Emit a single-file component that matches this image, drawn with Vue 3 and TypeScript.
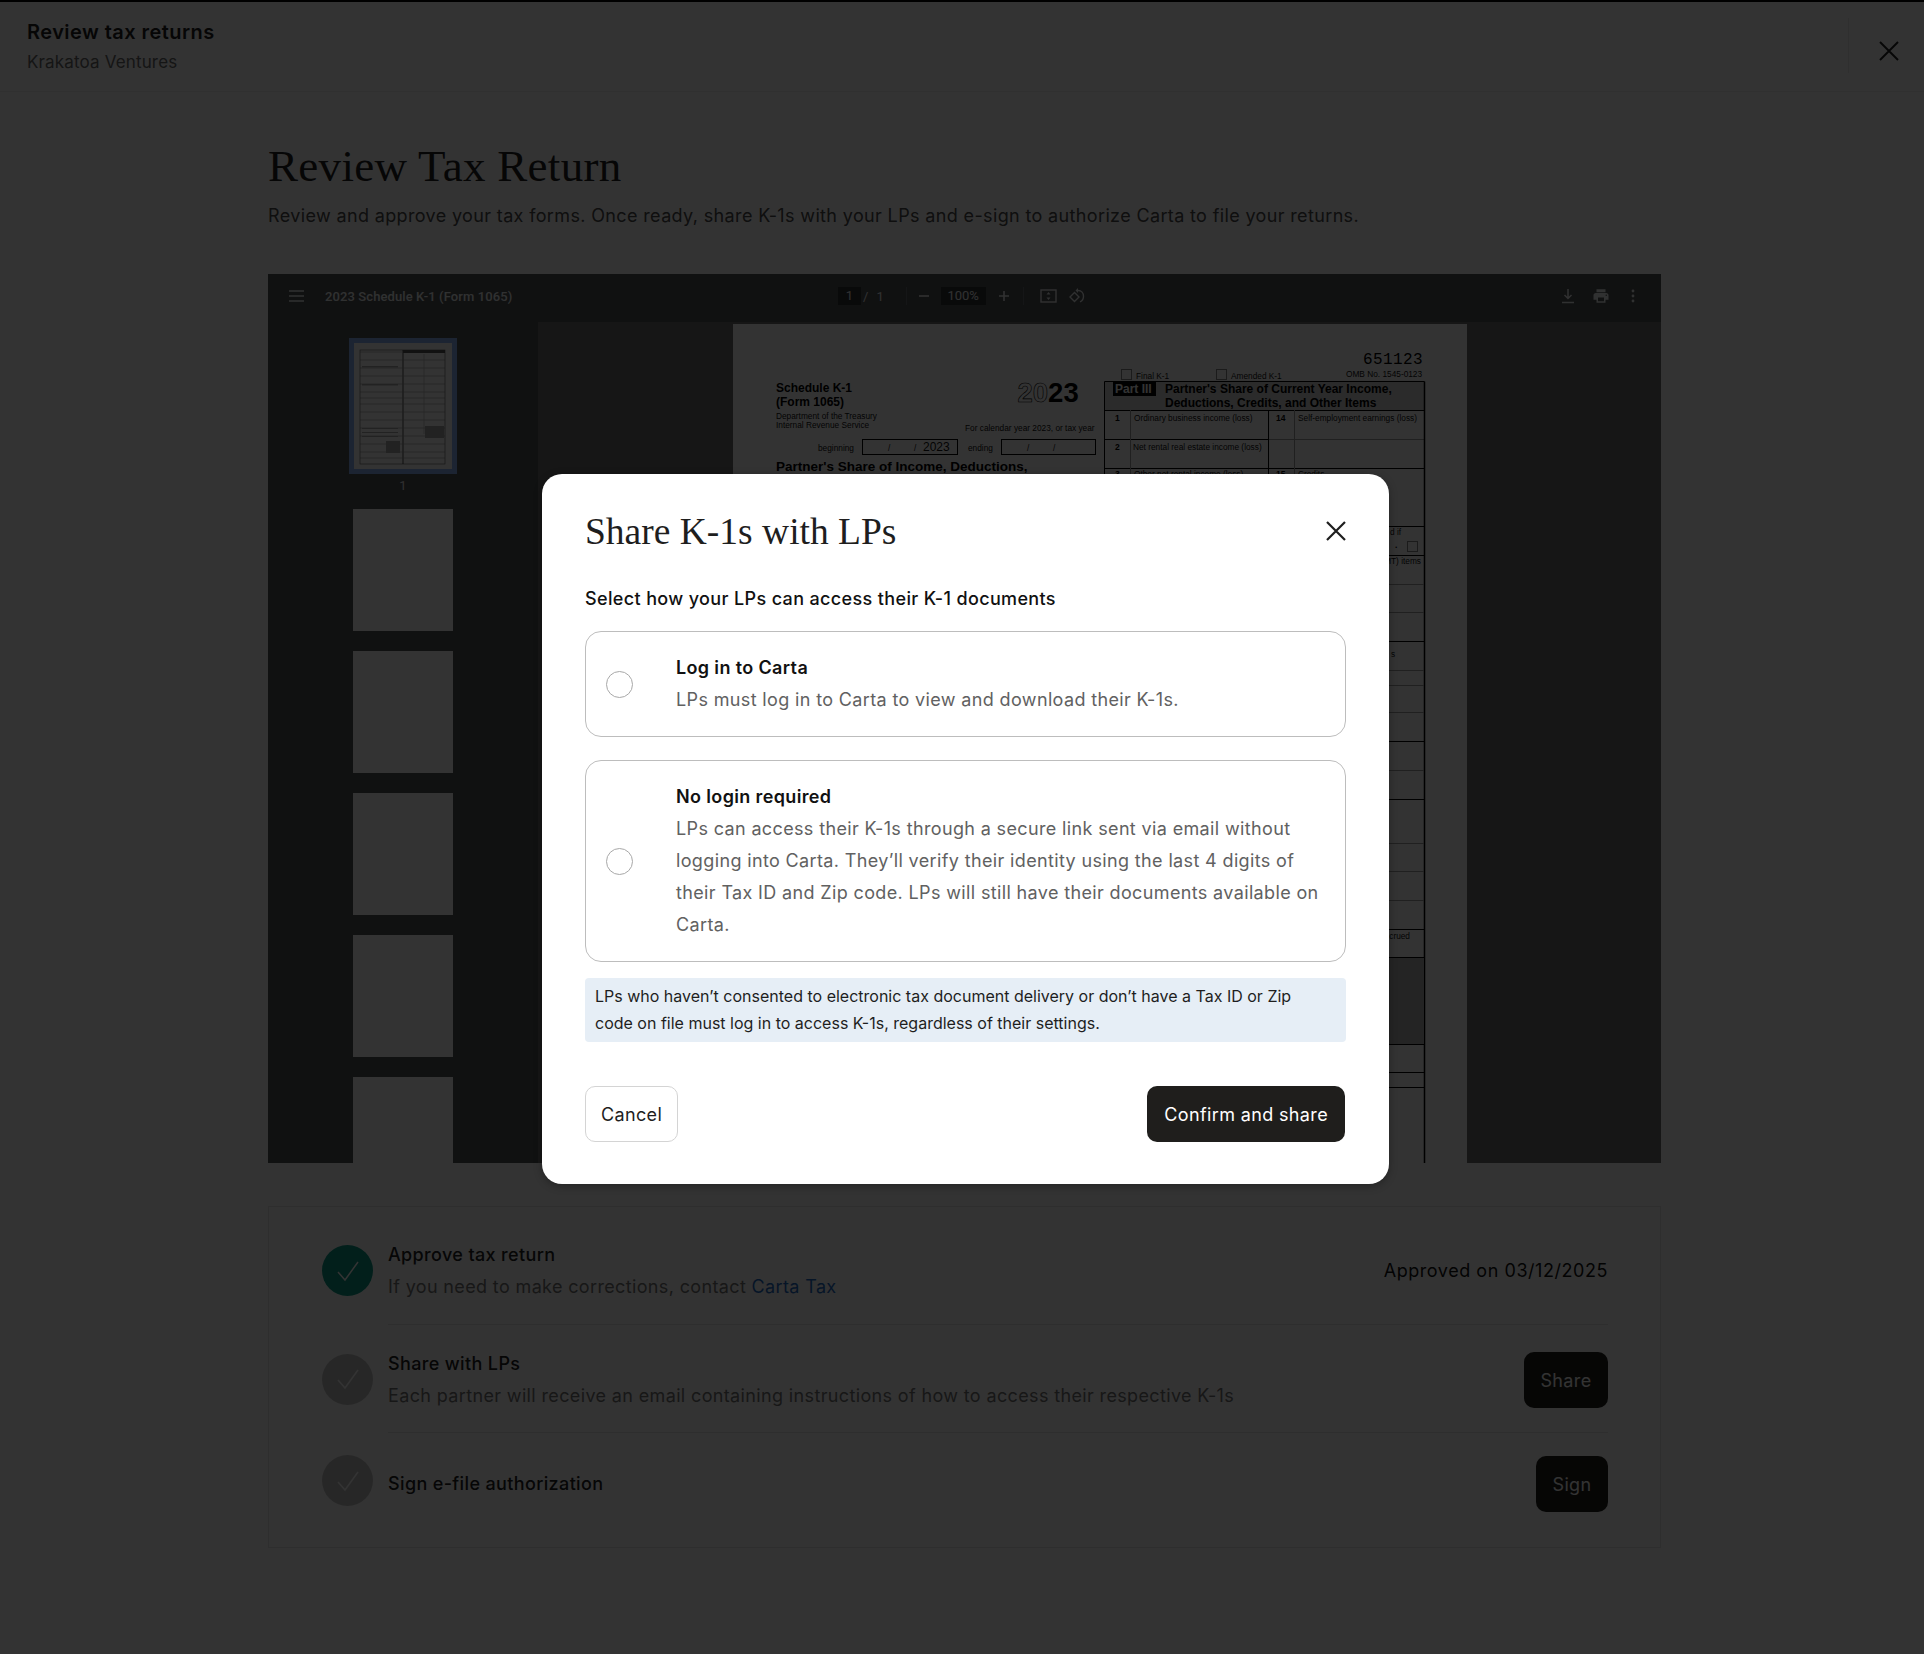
<script setup lang="ts">
import { ref } from 'vue'

const access = ref('')

const placeholders = [1, 2, 3, 4, 5]

// faint and strong rule positions of the form, only the strip right of the modal is visible
const faintRules = [584, 612, 670, 685, 712, 770, 843, 871, 900]
const darkRules = [526, 555, 641, 741, 799, 929, 957, 1044, 1072, 1087]

const thumbLines = [352, 360, 368, 376, 384, 392, 398, 404, 412, 420, 428, 436, 444, 452, 458]
const thumbBars = [
  { x: 362, y: 366, w: 36, h: 1.5 },
  { x: 362, y: 384, w: 36, h: 1.5 },
  { x: 362, y: 428, w: 36, h: 1 },
  { x: 362, y: 432, w: 36, h: 1 },
  { x: 362, y: 436, w: 36, h: 1 },
  { x: 386, y: 441, w: 14, h: 12 },
  { x: 425, y: 426, w: 19, h: 12 },
]
</script>

<template>
  <div class="page">
    <header class="topbar">
      <div>
        <div class="topbar-title">Review tax returns</div>
        <div class="topbar-sub">Krakatoa Ventures</div>
      </div>
      <button class="topbar-close" aria-label="Close">
        <svg width="20" height="20" viewBox="0 0 20 20"><path d="M1 1l18 18M19 1L1 19" stroke="#212121" stroke-width="2" fill="none" /></svg>
      </button>
    </header>

    <main class="content">
      <h1 class="heading">Review Tax Return</h1>
      <p class="intro">Review and approve your tax forms. Once ready, share K-1s with your LPs and e-sign to authorize Carta to file your returns.</p>

      <section class="viewer">
        <div class="viewer-bar">
          <div class="bar-left">
            <svg width="16" height="12" viewBox="0 0 16 12"><path d="M0 1h15M0 6h15M0 11h15" stroke="#f1f3f4" stroke-width="1.6" /></svg>
            <span class="doc-name">2023 Schedule K-1 (Form 1065)</span>
          </div>
          <div class="bar-mid">
            <span class="field page-field">1</span>
            <span class="bar-text slash">/</span>
            <span class="bar-text">1</span>
            <i class="sep first"></i>
            <svg class="minus" width="12" height="12" viewBox="0 0 12 12"><path d="M1 6h10" stroke="#f1f3f4" stroke-width="1.6" /></svg>
            <span class="field zoom-field">100%</span>
            <svg class="plus" width="12" height="12" viewBox="0 0 12 12"><path d="M1 6h10M6 1v10" stroke="#f1f3f4" stroke-width="1.6" /></svg>
            <i class="sep second"></i>
            <svg class="fit" width="17" height="14" viewBox="0 0 17 14"><rect x="1" y="1" width="15" height="12" fill="none" stroke="#f1f3f4" stroke-width="1.4" /><path d="M8.5 3l2 2.5h-4zM8.5 11l2-2.5h-4z" fill="#f1f3f4" /></svg>
            <svg class="rotate" width="16" height="18" viewBox="0 0 16 18"><path d="M5.500 5.500L1 10l4.500 4.500L10 10z" fill="none" stroke="#f1f3f4" stroke-width="1.400" /><path d="M9 3.500c3.500 0 5.500 2.700 5.500 5.800 0 2.600-1.500 4.800-3.500 5.600" fill="none" stroke="#f1f3f4" stroke-width="1.400" /><path d="M9 1v5L6.500 3.500z" fill="#f1f3f4" /></svg>
          </div>
          <div class="bar-right">
            <svg width="14" height="16" viewBox="0 0 14 16"><path d="M7 1v9M3.500 7L7 10.500 10.500 7M1 14.500h12" fill="none" stroke="#f1f3f4" stroke-width="1.500" /></svg>
            <svg width="18" height="18" viewBox="0 0 24 24"><path fill="#f1f3f4" d="M19 8H5c-1.660 0-3 1.340-3 3v6h4v4h12v-4h4v-6c0-1.660-1.340-3-3-3zm-3 11H8v-5h8v5zm3-7c-.550 0-1-.450-1-1s.450-1 1-1 1 .450 1 1-.450 1-1 1zm-1-9H6v4h12V3z" /></svg>
            <svg class="dots" width="4" height="14" viewBox="0 0 4 14"><circle cx="2" cy="2" r="1.400" fill="#f1f3f4" /><circle cx="2" cy="7" r="1.400" fill="#f1f3f4" /><circle cx="2" cy="12" r="1.400" fill="#f1f3f4" /></svg>
          </div>
        </div>

        <div class="viewer-body">
          <aside class="thumbs">
            <div class="thumb-active">
              <svg width="98" height="126" viewBox="354 343 98 126">
                <rect x="354" y="343" width="98" height="126" fill="#fff" />
                <rect x="360" y="350" width="85" height="114" fill="none" stroke="#555" stroke-width=".6" />
                <path d="M403 350v114" stroke="#222" stroke-width=".8" />
                <path d="M424 354v80" stroke="#999" stroke-width=".5" />
                <path v-for="y in thumbLines" :key="y" :d="`M360 ${y}H445`" stroke="#888" stroke-width=".5" />
                <rect v-for="b in thumbBars" :key="b.y" :x="b.x" :y="b.y" :width="b.w" :height="b.h" fill="#aaa" />
                <rect x="403" y="350" width="42" height="3" fill="#555" />
              </svg>
            </div>
            <div class="thumb-num">1</div>
            <div v-for="p in placeholders" :key="p" class="thumb-empty"></div>
          </aside>

          <div class="doc-area">
            <svg class="doc" width="734" height="839" viewBox="733 324 734 839">
              <rect x="733" y="324" width="734" height="839" fill="#fff" />

              <text x="776" y="392" class="b12">Schedule K-1</text>
              <text x="776" y="406" class="b12">(Form 1065)</text>
              <text x="776" y="419" class="r8">Department of the Treasury</text>
              <text x="776" y="428" class="r8">Internal Revenue Service</text>

              <text x="1017.500" y="402" class="year"><tspan class="year-outline">20</tspan>23</text>
              <text x="965" y="431" class="r8">For calendar year 2023, or tax year</text>

              <text x="818" y="451" class="r8">beginning</text>
              <rect x="862.500" y="439.500" width="95" height="15" class="cell" />
              <text x="888" y="451" class="r8">/</text>
              <text x="914" y="451" class="r8">/</text>
              <text x="923" y="451" class="r12">2023</text>
              <text x="968" y="451" class="r8">ending</text>
              <rect x="1001.500" y="439.500" width="94" height="15" class="cell" />
              <text x="1027" y="451" class="r8">/</text>
              <text x="1053" y="451" class="r8">/</text>

              <text x="776" y="471" class="b14">Partner's Share of Income, Deductions,</text>

              <text x="1363" y="364" class="serial">651123</text>
              <rect x="1121.500" y="369.500" width="10" height="10" class="box" />
              <text x="1136" y="379" class="r8">Final K-1</text>
              <rect x="1216.500" y="369.500" width="10" height="10" class="box" />
              <text x="1231" y="379" class="r8">Amended K-1</text>
              <text x="1346" y="377" class="r8">OMB No. 1545-0123</text>

              <rect x="1104.500" y="381.500" width="320" height="28.500" fill="#d4d4d4" />
              <rect x="1113" y="382" width="43" height="14" fill="#000" />
              <text x="1115" y="393" class="b12 white">Part III</text>
              <text x="1165" y="393" class="b12">Partner's Share of Current Year Income,</text>
              <text x="1165" y="407" class="b12">Deductions, Credits, and Other Items</text>

              <path d="M1104.500 381.500H1424.500M1104.500 410.500H1424.500M1104.500 468.500H1424.500M1104.500 439.500H1268.500" class="line" />
              <path d="M1268.500 439.500H1424.500" class="faint" />
              <path d="M1104.500 381.500V526M1268.500 410V526" class="line" />
              <path d="M1130.500 410V526M1294.500 410V526" class="faint" />
              <path d="M1424.500 381.500V1163" class="thick" />

              <text x="1115" y="421" class="b8">1</text>
              <text x="1134" y="421" class="r8">Ordinary business income (loss)</text>
              <text x="1276" y="421" class="b8">14</text>
              <text x="1298" y="421" class="r8">Self-employment earnings (loss)</text>
              <text x="1115" y="450" class="b8">2</text>
              <text x="1133" y="450" class="r8">Net rental real estate income (loss)</text>
              <text x="1115" y="477" class="b8">3</text>
              <text x="1134" y="477" class="r8">Other net rental income (loss)</text>
              <text x="1276" y="477" class="b8">15</text>
              <text x="1298" y="477" class="r8">Credits</text>

              <text x="1390" y="535" class="r8">d if</text>
              <text x="1395" y="548" class="b8">.</text>
              <rect x="1407.500" y="541.500" width="10" height="10" class="box" />
              <text x="1421" y="564" text-anchor="end" class="r8">(AMT) items</text>
              <text x="1391" y="657" class="r8">s</text>
              <text x="1410" y="939" text-anchor="end" class="r8">accrued</text>
              <rect x="1370" y="957" width="54" height="87" fill="#b5b5b5" />
              <path v-for="y in faintRules" :key="y" :d="`M1370 ${y + .5}H1424`" class="faint" />
              <path v-for="y in darkRules" :key="y" :d="`M1370 ${y + .5}H1424`" class="line" />
            </svg>
          </div>
        </div>
      </section>

      <section class="steps">
        <div class="step first">
          <span class="badge done">
            <svg width="26" height="26" viewBox="0 0 26 26"><path d="M3 14l7 8L23 4" fill="none" stroke="#fff" stroke-width="1.500" /></svg>
          </span>
          <div class="step-body">
            <div class="step-text">
              <div class="step-title">Approve tax return</div>
              <div class="step-desc">If you need to make corrections, contact <span class="link">Carta Tax</span></div>
            </div>
            <div class="approved">Approved on 03/12/2025</div>
          </div>
        </div>
        <div class="step">
          <span class="badge">
            <svg width="26" height="26" viewBox="0 0 26 26"><path d="M3 14l7 8L23 4" fill="none" stroke="#fff" stroke-width="1.500" /></svg>
          </span>
          <div class="step-body">
            <div class="step-text">
              <div class="step-title">Share with LPs</div>
              <div class="step-desc">Each partner will receive an email containing instructions of how to access their respective K-1s</div>
            </div>
            <button class="btn dark">Share</button>
          </div>
        </div>
        <div class="step last">
          <span class="badge">
            <svg width="26" height="26" viewBox="0 0 26 26"><path d="M3 14l7 8L23 4" fill="none" stroke="#fff" stroke-width="1.500" /></svg>
          </span>
          <div class="step-body">
            <div class="step-title">Sign e-file authorization</div>
            <button class="btn dark">Sign</button>
          </div>
        </div>
      </section>
    </main>

    <div class="overlay">
      <div class="modal">
        <div class="modal-head">
          <h2 class="modal-title">Share K-1s with LPs</h2>
          <button class="modal-close" aria-label="Close">
            <svg width="20" height="20" viewBox="0 0 20 20"><path d="M1 1l18 18M19 1L1 19" stroke="#1e1e1e" stroke-width="2.200" fill="none" /></svg>
          </button>
        </div>

        <div class="modal-label">Select how your LPs can access their K-1 documents</div>

        <label class="option">
          <input v-model="access" class="radio" type="radio" name="access" value="login" />
          <span>
            <span class="option-title">Log in to Carta</span>
            <span class="option-desc">LPs must log in to Carta to view and download their K-1s.</span>
          </span>
        </label>

        <label class="option second">
          <input v-model="access" class="radio" type="radio" name="access" value="link" />
          <span>
            <span class="option-title">No login required</span>
            <span class="option-desc">LPs can access their K-1s through a secure link sent via email without logging into Carta. They’ll verify their identity using the last 4 digits of their Tax ID and Zip code. LPs will still have their documents available on Carta.</span>
          </span>
        </label>

        <div class="note">LPs who haven’t consented to electronic tax document delivery or don’t have a Tax ID or Zip code on file must log in to access K-1s, regardless of their settings.</div>

        <div class="modal-foot">
          <button class="btn outline">Cancel</button>
          <button class="btn dark">Confirm and share</button>
        </div>
      </div>
    </div>
  </div>
</template>

<style>
html,
body {
  margin: 0;
  background: #fff;
}
</style>

<style scoped>
.page {
  position: relative;
  height: 1654px;
  overflow: hidden;
  background: #fff;
  font-family: Inter, "Liberation Sans", sans-serif;
  letter-spacing: .36px;
  color: #1e1e1e;
}

.topbar {
  height: 92px;
  box-sizing: border-box;
  border-top: 2px solid #000;
  border-bottom: 1px solid #ededed;
  padding: 16px 25px 0 27px;
  display: flex;
  justify-content: space-between;
}

.topbar-title {
  font-size: 20px;
  font-weight: 600;
  line-height: 28px;
  letter-spacing: .45px;
}

.topbar-sub {
  font-size: 17px;
  line-height: 28px;
  margin-top: 2px;
  letter-spacing: .15px;
  color: #6a6a6a;
}

.topbar-close {
  border: 0;
  border-left: 1px solid #e8e8e8;
  background: none;
  padding: 10px 0 0 30px;
  height: 55px;
  display: flex;
  align-items: center;
}

.content {
  margin: 0 263px 0 268px;
}

.heading {
  margin: 46px 0 0;
  font-family: "Liberation Serif", serif;
  font-size: 45px;
  font-weight: 400;
  letter-spacing: .3px;
  line-height: 56px;
}

.intro {
  margin: 7px 0 0;
  font-size: 18px;
  line-height: 30px;
  color: #4a4a4a;
}

.viewer {
  margin-top: 43px;
  height: 889px;
  display: flex;
  flex-direction: column;
  background: #6e7070;
  overflow: hidden;
}

.viewer-bar {
  height: 48px;
  flex: none;
  box-sizing: border-box;
  background: #505455;
  position: relative;
  display: flex;
  align-items: center;
  justify-content: space-between;
  padding: 0 26px 4px 21px;
  color: #f1f3f4;
  font-family: Roboto, "Liberation Sans", sans-serif;
  font-size: 13px;
  letter-spacing: 0;
}

.bar-left {
  display: flex;
  align-items: center;
  gap: 20px;
}

.doc-name {
  font-weight: 500;
  letter-spacing: .1px;
}

.bar-mid {
  position: absolute;
  left: 570px;
  top: 13px;
  height: 18px;
  display: flex;
  align-items: center;
}

.field {
  height: 18px;
  line-height: 18px;
  background: #2f3234;
  text-align: center;
}

.page-field {
  width: 23px;
}

.slash {
  margin: 0 8px 0 2px;
}

.sep {
  width: 1px;
  height: 18px;
  background: #6c7073;
}

.sep.first {
  margin-left: 22px;
}

.minus {
  margin: 0 11px 0 11px;
}

.zoom-field {
  width: 45px;
}

.plus {
  margin: 0 13px 0 12px;
}

.fit {
  margin: 0 12px 0 16px;
}

.bar-right {
  display: flex;
  align-items: center;
  gap: 17px;
}

.dots {
  margin-left: 4px;
}

.viewer-body {
  flex: 1;
  display: flex;
  min-height: 0;
}

.thumbs {
  width: 270px;
  flex: none;
  background: #505455;
  box-sizing: border-box;
  padding-top: 16px;
  display: flex;
  flex-direction: column;
  align-items: center;
}

.thumb-active {
  width: 108px;
  height: 136px;
  flex: none;
  box-sizing: border-box;
  border: 5px solid #8ab4f8;
  background: #fff;
}

.thumb-active svg {
  display: block;
}

.thumb-num {
  height: 35px;
  flex: none;
  line-height: 24px;
  font-family: Roboto, "Liberation Sans", sans-serif;
  font-size: 13px;
  color: #e8eaed;
  text-align: center;
}

.thumb-empty {
  width: 100px;
  height: 122px;
  flex: none;
  background: #fff;
  margin-bottom: 20px;
}

.doc-area {
  flex: 1;
  padding: 2px 0 0 195px;
  overflow: hidden;
}

.doc {
  display: block;
  font-family: "Liberation Sans", sans-serif;
  letter-spacing: 0;
}

.b12 {
  font-size: 12px;
  font-weight: 700;
  fill: #000;
}

.white {
  fill: #fff;
}

.b14 {
  font-size: 13.500px;
  font-weight: 700;
  fill: #000;
}

.b8 {
  font-size: 8.500px;
  font-weight: 700;
  fill: #000;
}

.r8 {
  font-size: 8.300px;
  fill: #111;
}

.r12 {
  font-size: 12px;
  fill: #111;
}

.year {
  font-size: 27.500px;
  font-weight: 700;
  fill: #000;
}

.year-outline {
  fill: none;
  stroke: #000;
  stroke-width: .6;
}

.serial {
  font-family: "Liberation Mono", monospace;
  font-size: 16px;
  letter-spacing: .4px;
  fill: #000;
}

.cell {
  fill: none;
  stroke: #000;
  stroke-width: 1;
}

.box {
  fill: none;
  stroke: #888;
  stroke-width: 1;
}

.line {
  fill: none;
  stroke: #000;
  stroke-width: 1;
}

.faint {
  fill: none;
  stroke: #a0a0a0;
  stroke-width: 1;
}

.thick {
  fill: none;
  stroke: #000;
  stroke-width: 1.500;
}

.steps {
  margin-top: 43px;
  height: 342px;
  box-sizing: border-box;
  border: 1px solid #e4e4e4;
  padding: 9px 52px 0 53px;
}

.step {
  display: flex;
  align-items: center;
  gap: 15px;
}

.badge {
  width: 51px;
  height: 51px;
  flex: none;
  border-radius: 50%;
  background: #c4c4c4;
  display: flex;
  align-items: center;
  justify-content: center;
}

.badge.done {
  background: #0b9a86;
}

.step-body {
  flex: 1;
  display: flex;
  align-items: center;
  justify-content: space-between;
  padding: 23px 0 20px;
  border-bottom: 1px solid #e4e4e4;
}

.step.first .step-body {
  padding-bottom: 21px;
}

.step.last .step-body {
  border-bottom: 0;
}

.step.last .badge {
  margin-top: -4px;
}

.step-title {
  font-size: 18px;
  font-weight: 500;
  line-height: 32px;
}

.step-desc {
  font-size: 18px;
  line-height: 32px;
  color: #757575;
}

.link {
  color: #1f6bc4;
}

.approved {
  font-size: 18px;
  line-height: 32px;
  letter-spacing: .55px;
  color: #111;
}

.btn {
  height: 56px;
  box-sizing: border-box;
  padding: 0 16.500px;
  border-radius: 10px;
  font-family: Inter, "Liberation Sans", sans-serif;
  font-size: 18px;
  letter-spacing: .36px;
}

.btn.dark {
  background: #1f1e1c;
  color: #fff;
  border: 0;
}

.btn.outline {
  padding: 0 15px;
  background: #fff;
  color: #1e1e1e;
  border: 1.500px solid #d4d4d4;
}

.overlay {
  position: absolute;
  inset: 0;
  background: rgba(0, 0, 0, .8);
  box-sizing: border-box;
  padding: 474px 535px 0 542px;
}

.modal {
  height: 710px;
  box-sizing: border-box;
  padding: 29px 43px 0;
  border-radius: 20px;
  background: #fff;
  box-shadow: 0 2px 8px rgba(0, 0, 0, .3);
}

.modal-head {
  display: flex;
  justify-content: space-between;
  align-items: center;
  height: 56px;
}

.modal-title {
  margin: 0;
  font-family: "Liberation Serif", serif;
  font-size: 37.500px;
  font-weight: 400;
  letter-spacing: 0;
  color: #1e1e1e;
}

.modal-close {
  border: 0;
  background: none;
  padding: 0;
  display: flex;
}

.modal-label {
  margin-top: 26px;
  font-size: 18px;
  font-weight: 500;
  line-height: 28px;
  color: #111;
}

.option {
  margin-top: 18px;
  display: flex;
  align-items: center;
  box-sizing: border-box;
  border: 1.500px solid #bdbdbd;
  border-radius: 16px;
  padding: 20px;
  gap: 43px;
}

.option.second {
  margin-top: 23px;
}

.radio {
  appearance: none;
  width: 27px;
  height: 27px;
  flex: none;
  margin: 0;
  border: 1.500px solid #a8a8a8;
  border-radius: 50%;
}

.option-title {
  display: block;
  font-size: 18px;
  font-weight: 600;
  line-height: 32px;
  color: #111;
}

.option-desc {
  display: block;
  font-size: 18px;
  line-height: 32px;
  color: #616161;
}

.note {
  margin-top: 16px;
  padding: 5px 30px 5px 10px;
  height: 64px;
  box-sizing: border-box;
  border-radius: 4px;
  background: #e6eef6;
  font-size: 16px;
  line-height: 27px;
  letter-spacing: 0;
  color: #1e1e1e;
}

.modal-foot {
  margin-top: 44px;
  display: flex;
  justify-content: space-between;
}

.modal-foot .dark {
  padding: 0 17px;
  margin-right: 1px;
}
</style>
